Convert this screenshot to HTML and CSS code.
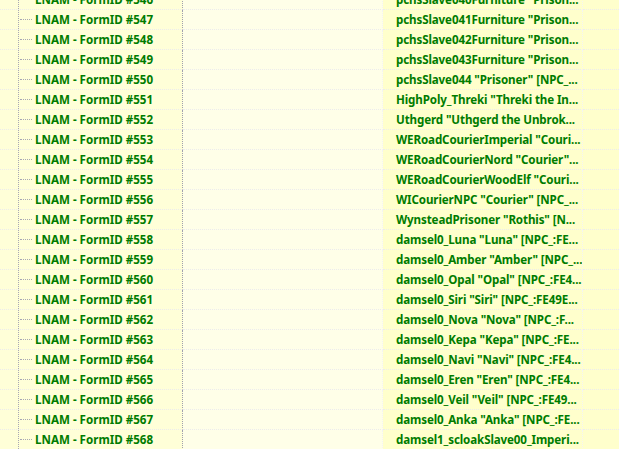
FILE: index.html
```html
<!DOCTYPE html>
<html lang="en">
<head>
    <meta charset="UTF-8">
    <title>Record view</title>
    <link rel="stylesheet" href="styles.css">
</head>
<body>
    <!-- lista de registros LNAM -->
    <div class="lista" id="lista"></div>

    <script>
        const nomes = [
            'pchsSlave040Furniture "Prison...',
            'pchsSlave041Furniture "Prison...',
            'pchsSlave042Furniture "Prison...',
            'pchsSlave043Furniture "Prison...',
            'pchsSlave044 "Prisoner" [NPC_...',
            'HighPoly_Threki "Threki the In...',
            'Uthgerd "Uthgerd the Unbrok...',
            'WERoadCourierImperial "Couri...',
            'WERoadCourierNord "Courier"...',
            'WERoadCourierWoodElf "Couri...',
            'WICourierNPC "Courier" [NPC_...',
            'WynsteadPrisoner "Rothis" [N...',
            'damsel0_Luna "Luna" [NPC_:FE...',
            'damsel0_Amber "Amber" [NPC_...',
            'damsel0_Opal "Opal" [NPC_:FE4...',
            'damsel0_Siri "Siri" [NPC_:FE49E...',
            'damsel0_Nova "Nova" [NPC_:F...',
            'damsel0_Kepa "Kepa" [NPC_:FE...',
            'damsel0_Navi "Navi" [NPC_:FE4...',
            'damsel0_Eren "Eren" [NPC_:FE4...',
            'damsel0_Veil "Veil" [NPC_:FE49...',
            'damsel0_Anka "Anka" [NPC_:FE...',
            'damsel1_scloakSlave00_Imperi...'
        ];

        const lista = document.getElementById('lista');
        nomes.forEach((nome, i) => {
            const linha = document.createElement('div');
            linha.className = 'linha';
            linha.innerHTML = `
                <div class="celula celula-nome">
                    <span class="trilho"></span>
                    <span class="ramo"></span>
                    <span class="rotulo">LNAM - FormID #${546 + i}</span>
                </div>
                <div class="celula celula-vazia"></div>
                <div class="celula celula-valor"><span class="rotulo">${nome.replace(/"/g, '&quot;')}</span></div>
                <div class="celula celula-resto"></div>
            `;
            lista.appendChild(linha);
        });
    </script>
</body>
</html>
```

FILE: styles.css
```css
body {
    margin: 0;
    overflow: hidden;
    background-color: #ffffcc;
    font-family: "Noto Sans", Arial, sans-serif;
    font-size: 11.6px;
    font-weight: bold;
    color: #007c00;
}
.lista {
    margin-top: -10px;
}
.linha {
    display: grid;
    grid-template-columns: 183px 200px 200px 1fr;
    height: 20px;
}
.celula {
    display: flex;
    align-items: center;
    box-sizing: border-box;
    height: 20px;
    border-bottom: 1px dotted #ececec;
    border-right: 1px dotted #f4f4f4;
    overflow: hidden;
    white-space: nowrap;
}
.celula-nome {
    align-items: stretch;
    background-color: #ffffd8;
    border-right-color: #a0a0b0;
}
.celula-vazia {
    background-color: #ffffe8;
}
.celula-valor {
    background-color: #ffffcc;
    padding-left: 13px;
    letter-spacing: -0.12px;
}
.celula-resto {
    background-color: #ffffcc;
    border-right: none;
}
.trilho {
    margin-left: 18px;
    width: 0;
    border-left: 1px dotted #a8a8b4;
}
.ramo {
    align-self: center;
    width: 12px;
    margin-left: 1px;
    border-top: 1px dotted #a8a8b4;
}
.celula-nome .rotulo {
    align-self: center;
    margin-left: 3px;
}
```
